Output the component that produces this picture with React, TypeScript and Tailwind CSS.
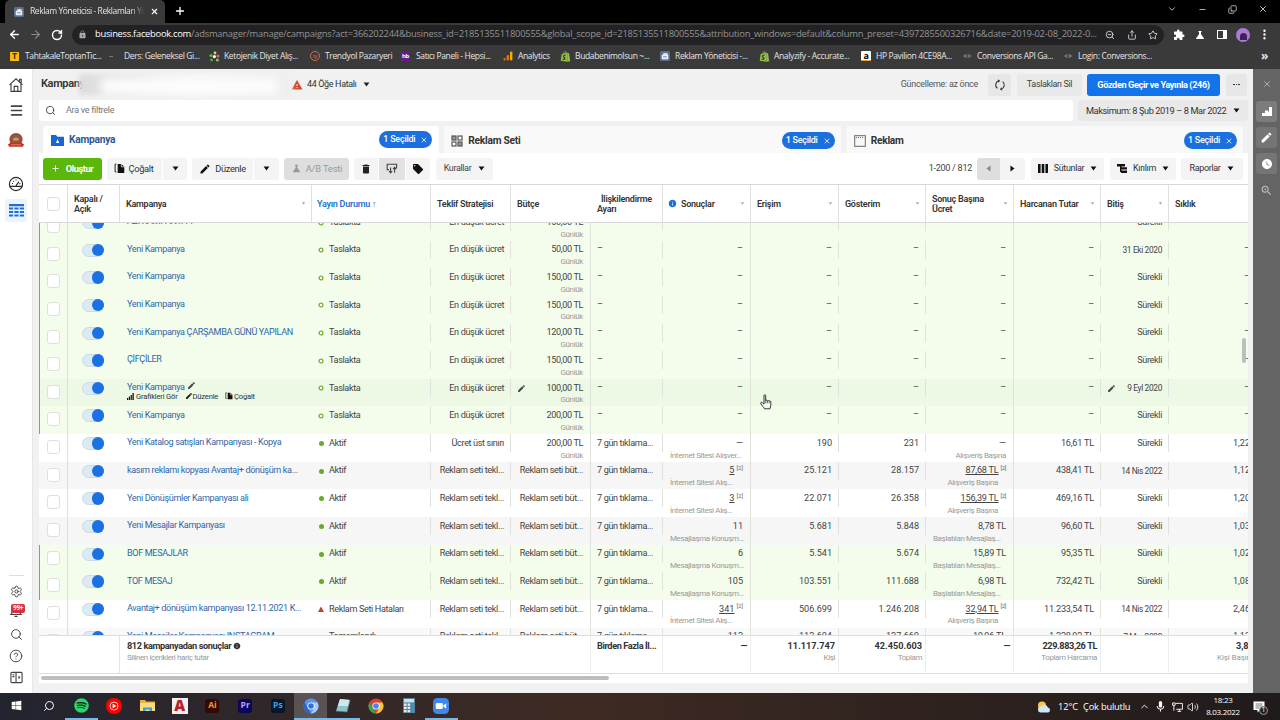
import type { ReactNode } from "react";
import clsx from "clsx";
import {
  ArrowLeft,
  ArrowRight,
  ChevronDown,
  ChevronUp,
  CircleHelp,
  Copy,
  Menu,
  Minus,
  MoreVertical,
  Plus,
  RotateCw,
  Search,
  Settings,
  Share,
  Star,
  Volume2,
  X,
  ZoomOut,
} from "lucide-react";
import {
  MdDelete,
  MdEdit,
  MdExtension,
  MdInfo,
  MdLocalOffer,
  MdLock,
  MdMic,
  MdScience,
  MdWarning,
  MdWatchLater,
  MdZoomIn,
} from "react-icons/md";
import { FaShopify, FaSpotify, FaWindows } from "react-icons/fa";

type Row = {
  name: string;
  status: string;
  dot?: "ring" | "full" | "error" | "done";
  bid: string;
  budget: string;
  attr?: string;
  results?: string;
  resultsSub?: string;
  reach?: string;
  views?: string;
  cost?: string;
  costSub?: string;
  note?: boolean;
  spent?: string;
  end: string;
  freq?: string;
  bg: string;
  bar?: boolean;
  hover?: boolean;
};

const draft = (name: string, budget: string, end = "Sürekli"): Row => ({
  name,
  budget,
  end,
  status: "Taslakta",
  dot: "ring",
  bid: "En düşük ücret",
  bg: "bg-[#f4fdec]",
  bar: true,
});

const adSet = {
  status: "Aktif",
  dot: "full" as const,
  bid: "Reklam seti tekl...",
  budget: "Reklam seti büt...",
  attr: "7 gün tıklama...",
};

const SHOP = "İnternet Sitesi Alış...";
const MSG = "Mesajlaşma Konuşm...";

const rows: Row[] = [
  draft("AZI KAMPANYA 1", "150,00 TL"),
  draft("Yeni Kampanya", "50,00 TL", "31 Eki 2020"),
  draft("Yeni Kampanya", "150,00 TL"),
  draft("Yeni Kampanya", "150,00 TL"),
  draft("Yeni Kampanya ÇARŞAMBA GÜNÜ YAPILAN", "120,00 TL"),
  draft("ÇİFÇİLER", "150,00 TL"),
  { ...draft("Yeni Kampanya", "100,00 TL", "9 Eyl 2020"), hover: true, bg: "bg-[#edf8e5]" },
  draft("Yeni Kampanya", "200,00 TL"),
  {
    ...adSet, name: "Yeni Katalog satışları Kampanyası - Kopya", bid: "Ücret üst sınırı", budget: "200,00 TL",
    results: "—", resultsSub: "İnternet Sitesi Alışver...", reach: "190", views: "231", cost: "—",
    costSub: "Alışveriş Başına", spent: "16,61 TL", end: "Sürekli", freq: "1,22", bg: "bg-white",
  },
  {
    ...adSet, name: "kasım reklamı kopyası Avantaj+ dönüşüm ka...", results: "5", resultsSub: SHOP, reach: "25.121",
    views: "28.157", cost: "87,68 TL", costSub: "Alışveriş Başına", note: true, spent: "438,41 TL",
    end: "14 Nis 2022", freq: "1,12", bg: "bg-[#f6f6f7]",
  },
  {
    ...adSet, name: "Yeni Dönüşümler Kampanyası ali", results: "3", resultsSub: SHOP, reach: "22.071",
    views: "26.358", cost: "156,39 TL", costSub: "Alışveriş Başına", note: true, spent: "469,16 TL",
    end: "Sürekli", freq: "1,20", bg: "bg-white",
  },
  {
    ...adSet, name: "Yeni Mesajlar Kampanyası", results: "11", resultsSub: MSG, reach: "5.681", views: "5.848",
    cost: "8,78 TL", costSub: "Başlatılan Mesajlaş...", spent: "96,60 TL", end: "Sürekli", freq: "1,03", bg: "bg-[#f6f6f7]",
  },
  {
    ...adSet, name: "BOF MESAJLAR", results: "6", resultsSub: MSG, reach: "5.541", views: "5.674",
    cost: "15,89 TL", costSub: "Başlatılan Mesajlaş...", spent: "95,35 TL", end: "Sürekli", freq: "1,02",
    bg: "bg-[#f4fdec]", bar: true,
  },
  {
    ...adSet, name: "TOF MESAJ", results: "105", resultsSub: MSG, reach: "103.551", views: "111.688",
    cost: "6,98 TL", costSub: "Başlatılan Mesajlaş...", spent: "732,42 TL", end: "Sürekli", freq: "1,08",
    bg: "bg-[#f4fdec]", bar: true,
  },
  {
    ...adSet, name: "Avantaj+ dönüşüm kampanyası 12.11.2021 K...", status: "Reklam Seti Hataları", dot: "error",
    results: "341", resultsSub: SHOP, reach: "506.699", views: "1.246.208", cost: "32,94 TL",
    costSub: "Alışveriş Başına", note: true, spent: "11.233,54 TL", end: "14 Nis 2022", freq: "2,46", bg: "bg-white",
  },
  {
    ...adSet, name: "Yeni Mesajlar Kampanyası INSTAGRAM", status: "Tamamlandı", dot: "done", results: "112",
    reach: "112.604", views: "127.660", cost: "10,96 TL", spent: "1.228,92 TL", end: "7 Mar 2022", freq: "1,13",
    bg: "bg-[#f9f9f9]",
  },
];

const GRID =
  "grid grid-cols-[29px_52px_192px_119px_80px_80px_72px_88px_88px_87px_88px_87px_68px_88px]";

/* Small icons */

const Caret = ({ className = "" }: { className?: string }) => (
  <svg viewBox="0 0 8 6" className={clsx("h-[5px] w-[7px] shrink-0", className)}>
    <path d="M0.5 0.5h7L4 5.5z" fill="currentColor" />
  </svg>
);

const Bars = ({ className = "" }: { className?: string }) => (
  <svg viewBox="0 0 10 10" className={className} fill="currentColor">
    <path d="M0 7h1.7v3H0zM2.6 5h1.7v5H2.6zM5.2 3h1.7v7H5.2zM7.8 0h1.9v10H7.8z" />
  </svg>
);

const Duplicate = ({ className = "" }: { className?: string }) => (
  <svg viewBox="0 0 12 12" className={className}>
    <path d="M2.6 1.2H1.2v8.6h1.4" fill="none" stroke="currentColor" strokeWidth="1" />
    <path d="M4 1h4l3.2 3.2V11H4z" fill="currentColor" />
    <path d="M8 1v3.2h3.2" fill="none" stroke="#f4f4f4" strokeWidth="0.8" />
  </svg>
);

const HomeIcon = () => (
  <svg viewBox="0 0 16 16" className="size-[16px]" fill="none" stroke="#3c3c3c" strokeWidth="1.1">
    <path d="M1.5 7.8 8 1.8l6.5 6M3 7v7.4h10V7M11.6 4.6V2.2h1.6V6" />
    <path d="M6.2 14.2V9.4h3.6v4.8" />
  </svg>
);

const Gauge = () => (
  <svg viewBox="0 0 16 16" className="size-[16px]" fill="none" stroke="#2b2b2b" strokeWidth="1.2">
    <circle cx="8" cy="8" r="6.6" />
    <path d="M1.8 10.4h12.4M8 9.6l3-4M4 7.5h1M5.2 5l.6.6M8 3.6v1M11.4 7.6h1" />
  </svg>
);

const TableIcon = () => (
  <svg viewBox="0 0 15 13" className="h-[13px] w-[15px]" fill="#1b6fd8">
    <path d="M0 0h15v2.2H0zM0 3.6h4.2v2H0zM5.4 3.6h4.2v2H5.4zM10.8 3.6H15v2h-4.2zM0 7h4.2v2H0zM5.4 7h4.2v2H5.4zM10.8 7H15v2h-4.2zM0 10.4h4.2v2H0zM5.4 10.4h4.2v2H5.4zM10.8 10.4H15v2h-4.2z" />
  </svg>
);

const Seal = () => (
  <svg viewBox="0 0 18 16" className="h-[16px] w-[18px]">
    <circle cx="9" cy="7.5" r="6.6" fill="#b8402c" />
    <circle cx="9" cy="6.6" r="4" fill="#6f6552" />
    <path d="M6 8.6a3 3 0 0 1 6 0z" fill="#d8935a" />
    <path d="M1 12.4l2-1.4h12l2 1.4-1 2.4H2z" fill="#c3321f" />
    <path d="M4 12.8h10" stroke="#e8a093" strokeWidth="0.7" />
  </svg>
);

const Chrome = ({ blue = false }: { blue?: boolean }) => (
  <svg viewBox="0 0 16 16" className="size-[16px]">
    <circle cx="8" cy="8" r="7.5" fill={blue ? "#5b93ee" : "#e33b2e"} />
    <path d="M1.5 4.3 5 10.2 8 15.5A7.5 7.5 0 0 1 1.5 4.3z" fill={blue ? "#2f63c5" : "#2da94f"} />
    <path d="M8 4.5h6.6A7.5 7.5 0 0 1 8 15.5l3.2-5.5z" fill={blue ? "#a9cbfa" : "#fcc934"} />
    <circle cx="8" cy="8" r="3.6" fill="#fff" />
    <circle cx="8" cy="8" r="2.8" fill={blue ? "#2f6fe0" : "#4285f4"} />
  </svg>
);

const MetaBox = () => (
  <svg viewBox="0 0 10 10" className="size-[10px] shrink-0">
    <rect width="10" height="10" rx="1.5" fill="#5b6f8c" />
    <path d="M2 4h6v4H2zM3.6 4V2.4h3.6V4" fill="#e9eef5" stroke="#e9eef5" strokeWidth="0.6" />
    <path d="M3.2 5.8h3.6" stroke="#5b6f8c" strokeWidth="0.8" />
  </svg>
);

const Plug = () => (
  <svg viewBox="0 0 12 8" className="h-[6px] w-[11px]" fill="#74777c">
    <path d="M0 4l4-3v6zM5 1.5h1v5H5zM7 1l4.5 3L7 7z" />
  </svg>
);

const Shop = () => <FaShopify className="size-[11px] text-[#95bf47]" />;

/* Browser chrome */

const bookmarks: { w: string; icon: ReactNode; label: string }[] = [
  { w: "w-[99px]", label: "TahtakaleToptanTic...", icon: <span className="flex size-[9px] items-center justify-center bg-[#f5b914] text-[8px] font-bold text-[#4b2a08]">T</span> },
  { w: "w-[100px]", label: "Ders: Geleneksel Gi...", icon: <span className="h-px w-[4px] bg-[#777]" /> },
  {
    w: "w-[101px]", label: "Ketojenik Diyet Alış...",
    icon: (
      <svg viewBox="0 0 11 11" className="size-[11px]">
        <circle cx="6" cy="2" r="1.4" fill="#e8d44a" />
        <circle cx="2" cy="4.6" r="1.5" fill="#5cb84a" />
        <circle cx="9" cy="5" r="1.5" fill="#d564a8" />
        <circle cx="5.4" cy="5.6" r="1.6" fill="#fff" />
        <circle cx="2.6" cy="9" r="1.4" fill="#58a83e" />
        <circle cx="8.4" cy="9" r="1.5" fill="#89c64c" />
      </svg>
    ),
  },
  { w: "w-[91px]", label: "Trendyol Pazaryeri", icon: <span className="flex size-[10px] items-center justify-center rounded-full border border-[#e2683a] text-[6px] text-[#e2683a]">ty</span> },
  { w: "w-[102px]", label: "Satıcı Paneli - Hepsi...", icon: <span className="flex size-[9px] items-center justify-center bg-[#6b1a86] text-[6px] font-bold text-white">hb</span> },
  {
    w: "w-[57px]", label: "Analytics",
    icon: (
      <svg viewBox="0 0 10 10" className="size-[10px]">
        <rect x="0.5" y="7" width="2.2" height="2.6" rx="1" fill="#e37400" />
        <rect x="3.6" y="4" width="2.4" height="5.6" rx="1" fill="#e37400" />
        <rect x="7" y="0.5" width="2.4" height="9.1" rx="1" fill="#f9ab00" />
      </svg>
    ),
  },
  { w: "w-[100px]", label: "Budabenimolsun ~...", icon: <Shop /> },
  { w: "w-[99px]", label: "Reklam Yöneticisi -...", icon: <MetaBox /> },
  { w: "w-[102px]", label: "Analyzify - Accurate...", icon: <Shop /> },
  { w: "w-[101px]", label: "HP Pavilion 4CE98A...", icon: <span className="flex size-[10px] items-center justify-center rounded-[1px] border-b border-[#f0a030] bg-white text-[9px] leading-none font-bold text-black">a</span> },
  { w: "w-[101px]", label: "Conversions API Ga...", icon: <Plug /> },
  { w: "w-[120px]", label: "Login: Conversions...", icon: <Plug /> },
];

const BrowserBar = () => (
  <div className="h-[69px] bg-[#3a3a3b] font-['Open_Sans',sans-serif] text-[#e4e4e4]">

    {/* Tab strip */}
    <div className="flex h-[23px] items-end bg-black">
      <div className="ml-[5px] flex h-[23px] w-[160px] items-center rounded-t-[5px] bg-[#3a3a3b] pl-[9px]">
        <MetaBox />
        <span className="ml-[6px] w-[115px] shrink-0 overflow-hidden text-[8.5px] tracking-[-0.42px] whitespace-nowrap [mask-image:linear-gradient(90deg,#000_88%,transparent)]">
          Reklam Yöneticisi - Reklamları Yö
        </span>
        <X className="ml-[5px] size-[9px] shrink-0 text-white" strokeWidth={3} />
      </div>
      <Plus className="mb-[6px] ml-[9px] size-[12px] text-white" strokeWidth={2.6} />
      <div className="mb-[9px] ml-auto flex items-center gap-[21px] pr-[12px] text-[#ddd]">
        <ChevronDown className="size-[10px]" />
        <Minus className="size-[9px]" />
        <Copy className="size-[9px] -scale-x-100 rotate-180" />
        <X className="size-[10px]" />
      </div>
    </div>

    {/* Address bar */}
    <div className="flex h-[23px] items-center">
      <ArrowLeft className="ml-[8px] size-[13px] text-white" strokeWidth={2.5} />
      <ArrowRight className="ml-[8px] size-[13px] text-[#8a8a8a]" strokeWidth={2} />
      <RotateCw className="ml-[9px] size-[12px] text-white" strokeWidth={2.8} />
      <div className="ml-[9px] flex h-[20px] w-[1092px] items-center rounded-full bg-[#222224] pl-[6px]">
        <MdLock className="size-[9px] shrink-0 text-[#aaa]" />
        <span className="ml-[8px] w-[1010px] shrink-0 text-[9.4px] tracking-[-0.23px] whitespace-nowrap text-[#939393]">
          <span className="tracking-[-0.29px] text-white">business.facebook.com</span>
          /adsmanager/manage/campaigns?act=366202244&amp;business_id=2185135511800555&amp;global_scope_id=2185135511800555&amp;attribution_windows=default&amp;column_preset=4397285500326716&amp;date=2019-02-08_2022-0...
        </span>
        <ZoomOut className="size-[10px] shrink-0" />
        <Share className="ml-[12px] size-[10px] shrink-0" />
        <Star className="ml-[11px] size-[10px] shrink-0" />
      </div>
      <MdExtension className="ml-[9px] size-[12px] text-white" />
      <MdScience className="ml-[9px] size-[12px] text-white" />
      <span className="ml-[11px] h-[9px] w-[10px] border border-r-[4px] border-white" />
      <span className="ml-[9px] flex size-[14px] items-end justify-center rounded-full bg-[#a97bd8]">
        <span className="mb-[2px] size-[7px] rounded-t-full bg-[#42234f]" />
      </span>
      <MoreVertical className="ml-[8px] size-[13px] text-white" strokeWidth={2.4} />
    </div>

    {/* Bookmarks */}
    <div className="flex h-[20px] items-center pl-[10px]">
      {bookmarks.map((b) => (
        <div key={b.label} className={clsx("flex shrink-0 items-center", b.w)}>
          <span className="flex w-[15px] shrink-0 items-center">{b.icon}</span>
          <span className="text-[8.5px] tracking-[-0.36px] whitespace-nowrap">{b.label}</span>
        </div>
      ))}
      <span className="ml-[78px] text-[12px] leading-none font-bold">»</span>
    </div>
  </div>
);

/* Left navigation */

const Sidebar = () => (
  <nav className="flex w-[33px] shrink-0 flex-col items-center border-r border-[#e6e6e6] bg-white pt-[8px] text-[#444]">
    <HomeIcon />
    <Menu className="mt-[10px] size-[15px]" strokeWidth={2.6} />
    <div className="mt-[14px]"><Seal /></div>
    <div className="mt-[28px]"><Gauge /></div>
    <div className="mt-[7px] flex h-[23px] w-[22px] items-center justify-center rounded-[3px] bg-[#eaf3fe]">
      <TableIcon />
    </div>
    <div className="mt-auto h-px w-[15px] bg-[#ddd]" />
    <Settings className="mt-[9px] size-[13px]" strokeWidth={1.8} />
    <div className="relative mt-[6px] h-[16px] w-[20px]">
      <svg viewBox="0 0 14 14" className="mx-auto size-[14px]" fill="none" stroke="#444" strokeWidth="1.2">
        <path d="M2 10.5c1-1 1.5-2 1.5-5h7c0 3 .5 4 1.5 5zM5.5 12.4h3" />
      </svg>
      <span className="absolute top-0 left-[5px] flex h-[9px] w-[14px] items-center justify-center rounded-[2px] bg-[#d3333f] text-[6.5px] font-bold text-white">
        99+
      </span>
    </div>
    <Search className="mt-[8px] size-[13px]" strokeWidth={1.8} />
    <CircleHelp className="mt-[8px] size-[14px]" strokeWidth={1.6} />
    <svg viewBox="0 0 14 14" className="mt-[8px] mb-[9px] size-[13px] shrink-0" fill="none" stroke="#444" strokeWidth="1.2">
      <rect x="1" y="1.5" width="12" height="11" rx="1" />
      <path d="M6.5 1.5v11M2.6 4h2.2M2.6 6h2.2" />
      <path d="M9 5l2.4 2L9 9z" fill="#444" stroke="none" />
    </svg>
  </nav>
);

/* Page header */

const Header = () => (
  <div className="flex h-[31px] items-center pl-[8px]">
    <div className="relative flex h-[22px] w-[250px] items-center">
      <span className="text-[11px] font-semibold text-[#333]">Kampanya</span>
      <span className="absolute top-0 left-[38px] h-[21px] w-[213px] bg-linear-to-r from-[#dcdcdc] via-[#f6f6f6] to-[#eeeeee] blur-[2px]" />
      <span className="absolute top-[5px] left-[60px] h-[15px] w-[176px] bg-[#fcfcfc] blur-[4px]" />
    </div>
    <MdWarning className="size-[12px] text-[#d4492f]" />
    <span className="ml-[4px] text-[9px] text-[#333]">44 Öğe Hatalı</span>
    <Caret className="ml-[6px] text-[#222]" />
    <span className="ml-auto text-[9px] tracking-[-0.3px] text-[#555]">Güncelleme: az önce</span>
    <div className="ml-[10px] flex h-[22px] w-[23px] items-center justify-center rounded-[3px] bg-[#e7e7e7]">
      <svg viewBox="0 0 12 12" className="size-[12px]" fill="none" stroke="#333" strokeWidth="1.1">
        <path d="M3.4 9.4A4.3 4.3 0 0 1 5 1.8M8.600 2.600A4.300 4.300 0 0 1 7 10.200" />
        <path d="M3.800 0.900 5.300 1.800 4.400 3.200M8.200 11.100 6.700 10.200 7.600 8.800" />
      </svg>
    </div>
    <div className="ml-[6px] flex h-[22px] w-[65px] items-center justify-center rounded-[3px] bg-[#e9e9e9] text-[9px] text-[#444]">
      Taslakları Sil
    </div>
    <div className="ml-[5px] flex h-[22px] w-[133px] items-center justify-center rounded-[3px] bg-[#1473e8] text-[9.2px] font-bold tracking-[-0.4px] whitespace-nowrap text-white">
      Gözden Geçir ve Yayınla (246)
    </div>
    <div className="mr-[6px] ml-[6px] flex h-[22px] w-[21px] items-center justify-center gap-[1px] rounded-[3px] bg-[#e7e7e7]">
      <i className="size-[1.6px] bg-[#333]" />
      <i className="size-[1.6px] bg-[#333]" />
      <i className="size-[1.6px] bg-[#333]" />
    </div>
  </div>
);

const SearchRow = () => (
  <div className="flex h-[21px] pl-[6px]">
    <div className="flex w-[1034px] items-center rounded-[3px] bg-white pl-[6px] text-[9px] tracking-[-0.28px] text-[#777]">
      <Search className="mr-[10px] size-[11px] text-[#444]" strokeWidth={2} />
      Ara ve filtrele
    </div>
    <div className="ml-[5px] flex w-[170px] items-center justify-between rounded-[3px] bg-[#e9e9e9] pr-[8px] pl-[8px] text-[9.2px] tracking-[-0.4px] whitespace-nowrap text-[#333]">
      Maksimum: 8 Şub 2019 – 8 Mar 2022
      <Caret className="text-[#111]" />
    </div>
  </div>
);

const Selected = () => (
  <span className="ml-auto flex h-[17px] w-[53px] items-center justify-center gap-[5px] rounded-full bg-[#1b6fdf] text-[9px] font-medium tracking-[-0.25px] whitespace-nowrap text-white">
    1 Seçildi
    <X className="size-[8px]" strokeWidth={2.4} />
  </span>
);

const Tabs = () => (
  <div className="mt-[5px] flex h-[27px] gap-[5px] px-[10px] text-[10.2px] font-bold tracking-[-0.25px] text-[#333]">
    <div className="flex w-[397px] items-center rounded-t-[3px] bg-white pr-[7px] pl-[8px] text-[#2b5797]">
      <svg viewBox="0 0 13 12" className="mr-[5px] h-[12px] w-[13px]">
        <path d="M0 1h5l1.4 1.8H13V12H0z" fill="#1a66d0" />
        <path d="M5 9l1.6-4L8.2 9zM5.8 7.8h1.6" fill="#fff" />
      </svg>
      Kampanya
      <Selected />
    </div>
    <div className="flex w-[397px] items-center rounded-t-[3px] bg-[#f9f9f9] pt-[2px] pr-[6px] pl-[7px]">
      <svg viewBox="0 0 12 12" className="mr-[5px] size-[12px]" fill="none" stroke="#555" strokeWidth="1.2">
        <rect x="1" y="1" width="4" height="4" fill="#999" />
        <rect x="7" y="1" width="4" height="4" />
        <rect x="1" y="7" width="4" height="4" />
        <rect x="7" y="7" width="4" height="4" fill="#999" />
      </svg>
      Reklam Seti
      <Selected />
    </div>
    <div className="flex w-[398px] items-center rounded-t-[3px] bg-[#f9f9f9] pt-[2px] pr-[6px] pl-[8px]">
      <svg viewBox="0 0 12 12" className="mr-[5px] size-[12px]" fill="none" stroke="#666" strokeWidth="1">
        <rect x="0.7" y="0.7" width="10.6" height="10.6" />
        <path d="M2 2.6h8" strokeDasharray="1 1" />
      </svg>
      Reklam
      <Selected />
    </div>
  </div>
);

const Btn = ({ className, children }: { className: string; children: ReactNode }) => (
  <div className={clsx("flex h-[22px] shrink-0 items-center justify-center whitespace-nowrap", className)}>{children}</div>
);

const Toolbar = () => (
  <div className="ml-[6px] flex h-[31px] w-[1209px] items-center bg-white pl-[4px] text-[9.3px] text-[#333]">
    <Btn className="w-[59px] gap-[6px] rounded-[3px] bg-[#5bb70a] pr-[1px] font-bold tracking-[-0.45px] text-white">
      <Plus className="size-[9px]" strokeWidth={2.6} />
      Oluştur
    </Btn>
    <Btn className="ml-[5px] w-[55px] gap-[4px] rounded-l-[3px] bg-[#f4f4f4] pr-[2px]">
      <Duplicate className="size-[11px] text-[#111]" />
      Çoğalt
    </Btn>
    <Btn className="ml-px w-[24px] rounded-r-[3px] bg-[#f4f4f4]"><Caret className="text-[#111]" /></Btn>
    <Btn className="ml-[5px] w-[61px] gap-[4px] rounded-l-[3px] bg-[#f4f4f4]">
      <MdEdit className="size-[12px] text-[#111]" />
      Düzenle
    </Btn>
    <Btn className="ml-px w-[25px] rounded-r-[3px] bg-[#f4f4f4]"><Caret className="text-[#111]" /></Btn>
    <Btn className="ml-[5px] w-[65px] gap-[4px] rounded-[3px] bg-[#dedede] tracking-[-0.15px] text-[#999]">
      <MdScience className="size-[11px]" />
      A/B Testi
    </Btn>
    <Btn className="ml-[5px] w-[24px] rounded-l-[3px] bg-[#f4f4f4]"><MdDelete className="size-[12px] text-[#222]" /></Btn>
    <Btn className="ml-px w-[26px] bg-[#e2e2e2]">
      <svg viewBox="0 0 12 11" className="h-[11px] w-[12px]" fill="none" stroke="#444" strokeWidth="1.1">
        <path d="M3 6.6H1.2V1.2h9.4v4" />
        <path d="M4.6 4.6v5M3 8l1.6 1.8L6.2 8M8.6 9.8v-5M7 6.2l1.6-1.8 1.6 1.8" />
      </svg>
    </Btn>
    <Btn className="ml-px w-[24px] rounded-r-[3px] bg-[#f4f4f4]">
      <MdLocalOffer className="size-[12px] text-[#111]" />
    </Btn>
    <Btn className="ml-[6px] w-[57px] gap-[7px] rounded-[3px] bg-[#f4f4f4] text-[9px] text-[#444]">
      Kurallar
      <Caret className="text-[#111]" />
    </Btn>
    <span className="ml-auto text-[9px] tracking-[-0.25px] text-[#444]">1-200 / 812</span>
    <Btn className="ml-[5px] w-[23px] rounded-l-[3px] bg-[#dedede] text-[#888]"><Caret className="rotate-90" /></Btn>
    <Btn className="w-[25px] rounded-r-[3px] bg-[#f4f4f4] text-[#111]"><Caret className="-rotate-90" /></Btn>
    <Btn className="ml-[6px] w-[73px] gap-[6px] rounded-[3px] bg-[#f4f4f4] text-[9px]">
      <svg viewBox="0 0 10 9" className="h-[9px] w-[10px]" fill="#111"><path d="M0 0h2.6v9H0zM3.7 0h2.6v9H3.7zM7.4 0H10v9H7.4z" /></svg>
      Sütunlar
      <Caret className="text-[#111]" />
    </Btn>
    <Btn className="ml-[6px] w-[66px] gap-[6px] rounded-[3px] bg-[#f4f4f4] text-[9px]">
      <svg viewBox="0 0 10 9" className="h-[9px] w-[10px]" fill="#111"><path d="M0 0h8v2.4H0zM3 3.2h7v2.4H3zM3 2h1.500v6H3zM4 6.600h6V9H4z" /></svg>
      Kırılım
      <Caret className="text-[#111]" />
    </Btn>
    <Btn className="mr-[5px] ml-[5px] w-[62px] gap-[7px] rounded-[3px] bg-[#f4f4f4] text-[9px]">
      Raporlar
      <Caret className="text-[#111]" />
    </Btn>
  </div>
);

/* Table */

const headers: { label: ReactNode; caret?: boolean; line?: boolean; cls?: string }[] = [
  { label: <>Kapalı /<br />Açık</>, line: true },
  { label: "Kampanya", caret: true, line: true },
  { label: <span className="text-[#2674d0]">Yayın Durumu ↑</span>, line: true, cls: "pl-[5px]" },
  { label: "Teklif Stratejisi", line: true },
  { label: "Bütçe" },
  { label: <><span className="ml-[4px]">İlişkilendirme</span><br />Ayarı</>, line: true },
  { label: <span className="flex items-center gap-[4px]"><MdInfo className="-ml-px size-[9px] text-[#1b6fdf]" />Sonuçlar</span>, caret: true, line: true },
  { label: "Erişim", caret: true, line: true },
  { label: "Gösterim", caret: true, line: true },
  { label: <>Sonuç Başına<br />Ücret</>, caret: true, line: true },
  { label: "Harcanan Tutar", caret: true, line: true },
  { label: "Bitiş", caret: true, line: true },
  { label: "Sıklık" },
];

const Checkbox = ({ className = "" }: { className?: string }) => (
  <span className={clsx("block h-[14px] w-[13px] rounded-[3px] border border-[#dde0dd] bg-white", className)} />
);

const TableHead = () => (
  <div className={clsx(GRID, "h-[39px] border-t border-b border-[#d8d8d8] bg-white text-[9px] leading-[10px] font-semibold tracking-[-0.26px] text-[#333]")}>
    <div className="flex items-center justify-center border-r border-[#ddd]"><Checkbox /></div>
    {headers.map((h, i) => (
      <div
        key={i}
        className={clsx("flex items-center justify-between pr-[5px] whitespace-nowrap", h.cls ?? "pl-[6px]", h.line && "border-r border-[#e0e0e0]")}
      >
        <div>{h.label}</div>
        {h.caret && <Caret className="h-[3px]! w-[5px]! text-[#aaa]" />}
      </div>
    ))}
  </div>
);

type CellProps = { children?: ReactNode; sub?: string; left?: boolean; full?: boolean; up?: boolean; subCls?: string; lead?: ReactNode; num?: boolean };

const Cell = ({ children, sub, left, full, up, subCls, lead, num }: CellProps) => (
  <div className={clsx("h-full min-w-0 whitespace-nowrap", full && "border-r border-[#dfe3db]")}>
    <div
      className={clsx(
        "flex h-[18px] items-center pl-[6px]",
        full ? "pr-[7px]" : "pr-[6px]",
        left ? "justify-start" : "justify-end",
        !full && "border-r border-[#dfe3db]",
        up ? "pb-[1px]" : "pt-px",
        num && "tracking-normal"
      )}
    >
      {lead}
      {children}
    </div>
    {sub && <div className={clsx("flex h-[7px] items-center text-[8px] tracking-[-0.36px] text-[#999]", subCls ?? "justify-end pr-[7px]")}>{sub}</div>}
  </div>
);

const StatusDot = ({ kind }: { kind: Row["dot"] }) => {
  if (kind === "error")
    return <svg viewBox="0 0 6 6" className="mr-[5px] size-[6px]"><path d="M3 .5l3 5.5H0z" fill="#c2412d" /></svg>;
  if (kind === "ring")
    return (
      <svg viewBox="0 0 6 6" className="mr-[5px] size-[6px]">
        <circle cx="3" cy="3" r="1.9" fill="#fff" stroke="#74b42b" strokeWidth="1.3" />
      </svg>
    );
  return <span className={clsx("mr-[5px] ml-px size-[5px] shrink-0 rounded-full", kind === "full" ? "bg-[#6aa92b]" : "bg-[#aaa]")} />;
};

const Note = () => <sup className="ml-[2px] text-[6px] text-[#666]">[2]</sup>;

const CampaignRow = ({ row }: { row: Row }) => {
  const isDraft = row.status === "Taslakta";
  const dash = "–";
  return (
    <div className={clsx(GRID, "h-[27.65px] text-[9.1px] text-[#444]", row.bg)}>
      <div className={clsx("flex justify-center border-r border-[#dde0da]", row.bar ? "border-l border-l-[#6fb93a] pr-px" : "pl-0")}>
        <Checkbox className="mt-[6px]" />
      </div>
      <div className="pt-[3px] pl-[14px]">
        <div className="flex h-[13px] w-[22px] justify-end rounded-full border border-[#c9dbe6] bg-[#dcebf3]">
          <span className="-mt-px -mr-px size-[12.5px] rounded-full bg-[#1b70e2]" />
        </div>
      </div>
      <div className="pt-[3px] pl-[7px] whitespace-nowrap text-[#2f67a8]">
        <div className="flex h-[12px] items-center">
          {row.name}
          {row.hover && <MdEdit className="mb-[4px] ml-[2px] size-[9px] text-[#444]" />}
        </div>
        {row.hover && (
          <div className="-mt-px flex h-[7px] items-center text-[7.6px] tracking-[-0.2px] text-[#333]">
            <Bars className="mr-[2px] size-[7px] text-[#111]" />
            Grafikleri Gör
            <MdEdit className="ml-[7px] size-[8px] text-[#111]" />
            Düzenle
            <Duplicate className="mr-px ml-[7px] size-[8px] text-[#111]" />
            Çoğalt
          </div>
        )}
      </div>
      <Cell left><StatusDot kind={row.dot} />{row.status}</Cell>
      <Cell>{row.bid}</Cell>
      <Cell full sub={row.budget.endsWith("TL") ? "Günlük" : undefined} lead={row.hover && <MdEdit className="mr-auto size-[9px] text-[#444]" />}>
        {row.budget}
      </Cell>
      <Cell left up={isDraft}>{row.attr ?? dash}</Cell>
      <Cell full num up={isDraft} sub={row.resultsSub} subCls="pl-[7px]">
        <span className={clsx(row.note && "underline")}>{row.results ?? dash}</span>
        {row.note && <Note />}
      </Cell>
      <Cell num up={isDraft}>{row.reach ?? dash}</Cell>
      <Cell num up={isDraft}>{row.views ?? dash}</Cell>
      <Cell
        full
        up={isDraft}
        sub={row.costSub}
        subCls={row.note ? "justify-end pr-[15px]" : row.costSub?.endsWith("...") ? "pl-[7px]" : undefined}
      >
        <span className={clsx("tracking-[-0.2px]", row.note && "underline")}>{row.cost ?? dash}</span>
        {row.note && <Note />}
      </Cell>
      <Cell up={isDraft}><span className="tracking-[-0.2px]">{row.spent ?? dash}</span></Cell>
      <Cell lead={row.hover && <MdEdit className="mr-auto size-[9px] text-[#444]" />}>
        <span className={clsx(/\d/.test(row.end) && "text-[8.4px]")}>{row.end}</span>
      </Cell>
      <Cell num up={isDraft}>{row.freq ?? dash}</Cell>
    </div>
  );
};

const Total = ({ value, label, left }: { value?: string; label?: string; left?: boolean }) => (
  <div className={clsx("border-r border-[#eee] pt-[4px] whitespace-nowrap", left ? "pl-[6px]" : "pr-[3px] text-right")}>
    <div className={clsx("h-[11px] leading-[11px] font-bold text-[#333]", label && !value?.endsWith("TL") && "tracking-normal")}>{value}</div>
    <div className="h-[12px] text-[8px] leading-[13px] text-[#999]">{label}</div>
  </div>
);

const TableFoot = () => (
  <div className={clsx(GRID, "h-[39px] border-t border-b border-[#ddd] bg-white text-[9.2px] tracking-[-0.4px]")}>
    <div />
    <div className="border-r border-[#e4e4e4]" />
    <div className="col-span-4 border-r border-[#eee] pt-[4px] pl-[7px]">
      <div className="flex h-[11px] items-center font-bold text-[#333]">
        812 kampanyadan sonuçlar
        <MdInfo className="ml-[2px] size-[8px]" />
      </div>
      <div className="text-[8px] leading-[13px] text-[#999]">Silinen içerikleri hariç tutar</div>
    </div>
    <Total value="Birden Fazla İl..." left />
    <Total value="—" />
    <Total value="11.117.747" label="Kişi" />
    <Total value="42.450.603" label="Toplam" />
    <Total value="—" />
    <Total value="229.883,26 TL" label="Toplam Harcama" />
    <Total />
    <div className="pt-[4px] pl-[48px] tracking-[-0.1px] whitespace-nowrap">
      <div className="h-[11px] pl-[19px] leading-[11px] font-bold text-[#333]">3,80</div>
      <div className="text-[8px] leading-[13px] text-[#999]">Kişi Başına</div>
    </div>
  </div>
);

const HandCursor = () => (
  <svg viewBox="0 0 12 17" className="absolute top-[171px] left-[721px] h-[17px] w-[12px]">
    <path
      d="M4 1.6c0-1.2 1.7-1.2 1.7 0v5c.3-.8 1.6-.7 1.7.2.4-.7 1.6-.5 1.7.4.4-.6 1.7-.4 1.7.6v3.4c0 1.4-.8 2-.8 3.6H4.4C4 13.2 1.6 11.6.8 9.6c-.5-1.1.7-1.8 1.5-1L4 10.2z"
      fill="#f4f9ef"
      stroke="#222"
      strokeWidth="0.9"
    />
    <path d="M5.7 6.6v2.6M7.4 7v2.2M9.1 7.4v1.8" stroke="#222" strokeWidth="0.7" />
  </svg>
);

const Table = () => (
  <div className="ml-[6px] w-[1209px] overflow-hidden">
    <TableHead />
    <div className="relative h-[412px] overflow-hidden">
      <div className="-mt-[10px]">
        {rows.map((row, i) => (
          <CampaignRow key={i} row={row} />
        ))}
      </div>
      <span className="absolute top-[115px] right-[2px] h-[25px] w-[4px] rounded-full bg-[#bdbfbb]" />
      <HandCursor />
    </div>
    <TableFoot />
    <div className="h-[9px] bg-white pt-[2px] pl-[2px]">
      <div className="h-[4px] w-[568px] rounded-full bg-[#bdbdbd]" />
    </div>
  </div>
);

const RightRail = () => (
  <aside className="flex w-[27px] shrink-0 flex-col items-center bg-[#646464] text-white">
    <X className="mt-[10px] size-[10px] text-[#bbb]" strokeWidth={2} />
    <div className="mt-[12px] flex h-[21px] w-[21px] items-center justify-center rounded-[3px] bg-[#7c7c7c]">
      <svg viewBox="0 0 10 9" className="h-[9px] w-[10px]" fill="#fff"><path d="M0 6h3V3.5h3v1h1V0h3v9H0z" /></svg>
    </div>
    <div className="mt-[5px] flex h-[21px] w-[21px] items-center justify-center rounded-[3px] bg-[#757575]">
      <MdEdit className="size-[13px]" />
    </div>
    <div className="mt-[5px] flex h-[21px] w-[21px] items-center justify-center rounded-[3px] bg-[#757575]">
      <MdWatchLater className="size-[12px]" />
    </div>
    <MdZoomIn className="mt-[10px] size-[13px] text-[#bbb]" />
  </aside>
);

/* Windows taskbar */

const Adobe = ({ label, className }: { label: string; className: string }) => (
  <span className={clsx("flex size-[14px] items-center justify-center rounded-[3px] text-[8.5px] font-bold", className)}>{label}</span>
);

const taskIcons: { icon: ReactNode; open?: boolean; active?: boolean }[] = [
  { icon: <FaWindows className="size-[11px] text-white" /> },
  { icon: <Search className="size-[12px] -scale-x-100 text-white" strokeWidth={2} /> },
  { icon: <FaSpotify className="size-[15px] text-[#2bd566]" />, open: true },
  {
    icon: (
      <svg viewBox="0 0 16 16" className="size-[16px]">
        <circle cx="8" cy="8" r="8" fill="#f00" />
        <circle cx="8" cy="8" r="4" fill="none" stroke="#fff" strokeWidth="0.8" />
        <path d="M6.6 5.6 10.4 8l-3.8 2.4z" fill="#fff" />
      </svg>
    ),
  },
  {
    icon: (
      <svg viewBox="0 0 15 13" className="h-[13px] w-[15px]">
        <path d="M0 1h5l1.2 1.5H15V12H0z" fill="#e9b23c" />
        <path d="M0 4h15v8H0z" fill="#fbdc7c" />
        <path d="M3 12V8.5h9V12H9.5v-1.6h-4V12z" fill="#3f9be0" />
      </svg>
    ),
  },
  { icon: <span className="flex size-[16px] items-center justify-center bg-[#f3efee] text-[15px] leading-none font-black text-[#b5202b]">A</span> },
  { icon: <Adobe label="Ai" className="bg-[#310a04] text-[#f59a2c]" /> },
  { icon: <Adobe label="Pr" className="bg-[#0b0658] text-[#b7a4ff]" /> },
  { icon: <Adobe label="Ps" className="bg-[#04182b] text-[#3aa6f5]" /> },
  { icon: <Chrome blue />, active: true, open: true },
  {
    icon: (
      <svg viewBox="0 0 16 15" className="h-[15px] w-[16px]">
        <path d="M5 1l10 1-3 12-11-1z" fill="#8ec3cf" />
        <path d="M5 1l10 1-1.5 6L2.8 8z" fill="#cfe8ec" />
        <path d="M1 13l11 1 3-12" fill="none" stroke="#4a7f8c" strokeWidth="0.8" />
      </svg>
    ),
    open: true,
  },
  { icon: <Chrome /> },
  {
    icon: (
      <svg viewBox="0 0 12 15" className="h-[15px] w-[12px]">
        <rect width="12" height="15" fill="#5c7f93" />
        <rect x="1" y="1" width="10" height="3.4" fill="#bfe6f5" />
        <path d="M1 5.5h2.6v2.3H1zM4.6 5.5h2.6v2.3H4.6zM1 8.7h2.6V11H1zM4.6 8.7h2.6V11H4.6zM1 12h2.6v2.2H1zM4.6 12h2.6v2.2H4.6z" fill="#e6eef2" />
        <path d="M8.2 5.5H11v8.7H8.2z" fill="#3a90d0" />
      </svg>
    ),
  },
  {
    icon: (
      <svg viewBox="0 0 16 16" className="size-[16px]">
        <rect width="16" height="16" rx="4.5" fill="#3f86ee" />
        <rect x="2.8" y="5" width="7" height="6" rx="1.2" fill="#fff" />
        <path d="M10.3 7.4 13.2 5.2v5.6l-2.9-2.2z" fill="#fff" />
      </svg>
    ),
    open: true,
  },
];

const Taskbar = () => (
  <div className="flex h-[27px] items-stretch bg-linear-to-r from-[#22242f] via-[#3e2a22] via-45% to-[#201b1b] font-['Open_Sans',sans-serif] tracking-normal text-white">
    {taskIcons.map((t, i) => (
      <div
        key={i}
        className={clsx(
          "flex w-[32.7px] items-center justify-center border-b-[2px]",
          t.open ? "border-[#76b9ed]" : "border-transparent",
          t.active && "bg-white/20"
        )}
      >
        {t.icon}
      </div>
    ))}
    <div className="ml-auto flex items-center">
      <svg viewBox="0 0 14 12" className="h-[12px] w-[14px]">
        <circle cx="5" cy="4.5" r="4" fill="#f7c64a" />
        <path d="M4 11.5a3 3 0 0 1 0-6 4 4 0 0 1 7 1 2.6 2.6 0 0 1 .2 5z" fill="#cfe6f4" />
      </svg>
      <span className="ml-[7px] w-[25px] text-[9.3px] tracking-[-0.1px] whitespace-nowrap">12°C</span>
      <span className="w-[56px] text-[9.3px] tracking-[-0.2px] whitespace-nowrap">Çok bulutlu</span>
      <ChevronUp className="size-[11px]" />
      <MdMic className="ml-[4px] size-[13px]" />
      <svg viewBox="0 0 12 11" className="ml-[5px] h-[10px] w-[11px]" fill="none" stroke="#fff" strokeWidth="1">
        <path d="M4 1.5h7.4V8H4.6M6 10.3h4M8 8v2.3M.6 1h2.8v2.6H.6zM2 3.6v6" />
      </svg>
      <Volume2 className="ml-[4px] size-[12px]" strokeWidth={1.6} />
      <div className="ml-[5px] w-[38px] pb-px text-center text-[8px] leading-[12px] tracking-[-0.3px]">
        18:23
        <br />
        8.03.2022
      </div>
      <div className="relative mr-[15px] ml-[11px]">
        <svg viewBox="0 0 12 12" className="h-[12px] w-[12px]">
          <path d="M.5.5h11V9H7l-2.5 2.5V9h-4z" fill="#fff" />
          <path d="M2.5 3h7M2.5 5h7M2.5 7h4" stroke="#333" strokeWidth="0.7" />
        </svg>
        <span className="absolute top-[5px] left-[6px] flex size-[9px] items-center justify-center rounded-full border border-[#999] bg-[#222] text-[7px]">
          1
        </span>
      </div>
    </div>
  </div>
);

const App = () => {
  return (
    <div className="flex h-[720px] w-[1280px] flex-col overflow-hidden font-['Roboto',sans-serif] tracking-[-0.36px]">
      <BrowserBar />
      <div className="flex min-h-0 flex-1">
        <Sidebar />
        <main className="w-[1220px] shrink-0 bg-[#f1f1f1]">
          <Header />
          <SearchRow />
          <Tabs />
          <Toolbar />
          <Table />
        </main>
        <RightRail />
      </div>
      <Taskbar />
    </div>
  );
};

export default App;
